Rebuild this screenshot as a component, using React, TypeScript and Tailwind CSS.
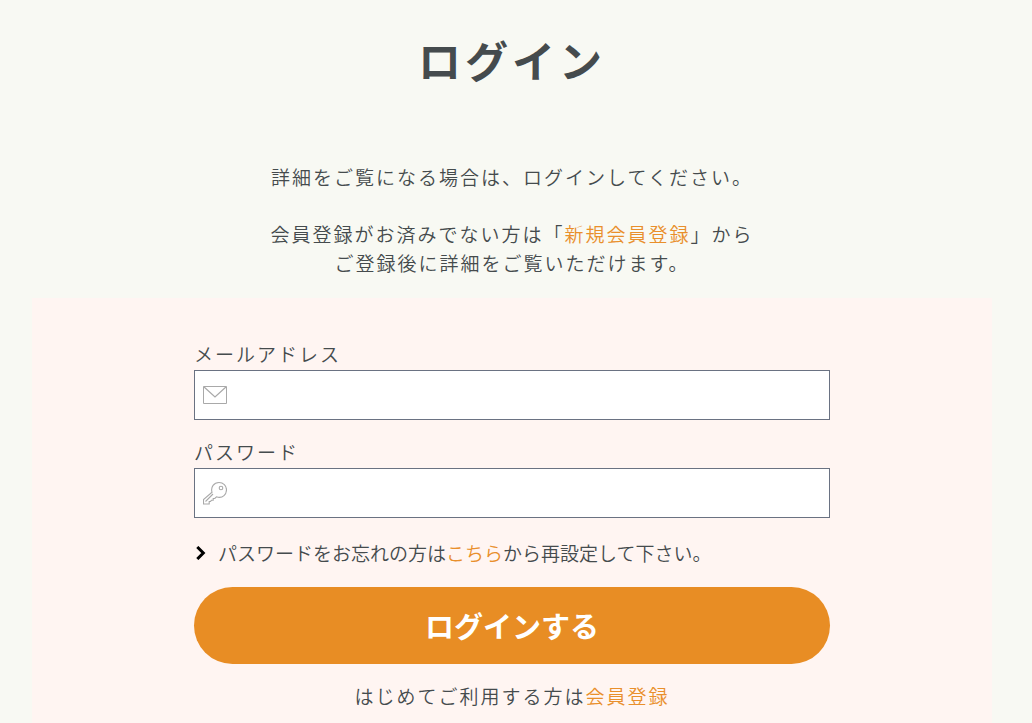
interface IconProps {
  className?: string;
}

function IconMail({ className }: IconProps) {
  return (
    <svg className={className} viewBox="0 0 24 18" fill="none" stroke="currentColor" aria-hidden="true">
      <path d="M.5 .5h23v17h-23z" />
      <path d="M.8 .8L12 11 23.2 .8" strokeWidth={1.2} />
    </svg>
  );
}

function IconKey({ className }: IconProps) {
  return (
    <svg className={className} viewBox="0 0 24 24" fill="none" stroke="currentColor" strokeWidth={1.1} aria-hidden="true">
      <path d="M9 11.2C7.5 6 11 1.5 16 1.5c4.3 0 7.5 3.2 7.5 7.3 0 4.7-3.8 8.2-8.5 7.4l-1.5-.4-1.700 1.700h-1.600v1.800H8.400l-.9 1.200H6.200v2.500H.5v-4.500z" />
      <path d="M2.500 20.500l7.500-7.500" />
      <circle cx="18" cy="7" r="1.800" />
    </svg>
  );
}

function IconChevron({ className }: IconProps) {
  return (
    <svg className={className} viewBox="0 0 10 14" fill="none" stroke="currentColor" strokeWidth={3} aria-hidden="true">
      <path d="M1.300 1L7.300 7 1.300 13" />
    </svg>
  );
}

const linkStyle = "text-[#e98f2b] hover:underline";
const inputStyle =
  "block w-full h-[50px] bg-white border border-gray-500 pl-11 pr-3 text-[19px] outline-none focus:border-[#e88d24]";
const iconStyle = "absolute left-[9px] text-[#a9a9a9] pointer-events-none";

export default function App() {
  return (
    <div className="min-h-screen bg-[#f8f9f3] pl-8 pr-10 text-[19px] leading-[29px] font-[350] tracking-[2px] text-[#454b4d] font-['Noto_Sans_CJK_JP',sans-serif]">
      <header className="pt-[29px] text-center">
        <h1 className="text-[43px] leading-[60px] font-bold tracking-[4px]">ログイン</h1>
        <p className="mt-[73px]">詳細をご覧になる場合は、ログインしてください。</p>
        <p className="mt-7">
          会員登録がお済みでない方は「<a href="#register" className={linkStyle}>新規会員登録</a>」から
          <br />
          ご登録後に詳細をご覧いただけます。
        </p>
      </header>

      <main className="mt-[21px] bg-[#fff5f2] pt-[41px] pb-10">
        <form className="mx-auto w-full max-w-[636px]">
          <label htmlFor="email" className="block mb-0.5">メールアドレス</label>
          <div className="relative flex items-center">
            <IconMail className={`${iconStyle} w-6 h-[18px]`} />
            <input id="email" type="email" className={inputStyle} />
          </div>

          <label htmlFor="password" className="block mt-[17px] mb-0.5">パスワード</label>
          <div className="relative flex items-center">
            <IconKey className={`${iconStyle} w-6 h-6`} />
            <input id="password" type="password" className={inputStyle} />
          </div>

          <p className="mt-5 flex items-center gap-3 tracking-normal">
            <IconChevron className="ml-0.5 w-2.5 h-3.5 shrink-0 text-black" />
            <span>
              パスワードをお忘れの方は<a href="#reset" className={linkStyle}>こちら</a>から再設定して下さい。
            </span>
          </p>

          <button type="submit" className="mt-5 block w-full h-[77px] rounded-full bg-[#e88d24] hover:bg-[#d97f18] text-[29px] font-bold tracking-normal text-white">
            ログインする
          </button>

          <p className="mt-[17px] text-center">
            はじめてご利用する方は<a href="#register" className={linkStyle}>会員登録</a>
          </p>
        </form>
      </main>
    </div>
  );
}
